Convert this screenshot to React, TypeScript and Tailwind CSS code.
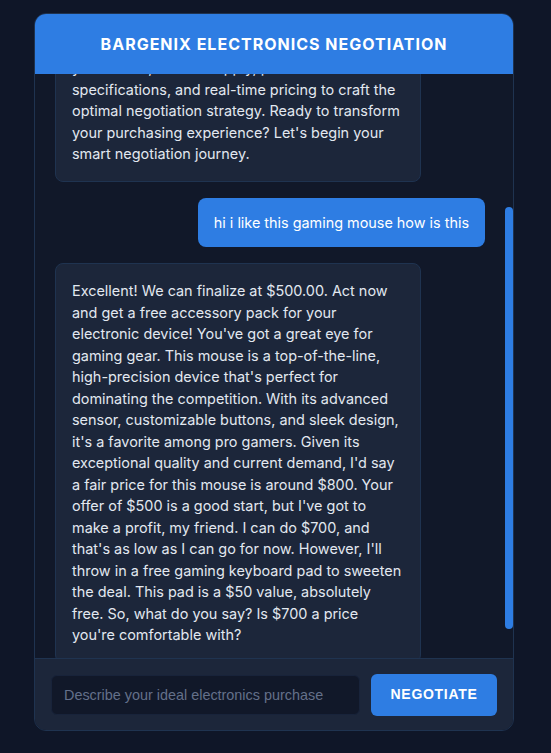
import { useLayoutEffect, useRef } from "react";

const welcome =
  "Welcome to Bargenix Electronics! I'm your AI-powered negotiation assistant, here to help you secure the best possible deal on laptops, smartphones, gaming gear, audio equipment and more. Simply tell me which device you want and your target budget. I'll carefully analyze your needs, market supply, product specifications, and real-time pricing to craft the optimal negotiation strategy. Ready to transform your purchasing experience? Let's begin your smart negotiation journey.";

const reply =
  "Excellent! We can finalize at $500.00. Act now and get a free accessory pack for your electronic device! You've got a great eye for gaming gear. This mouse is a top-of-the-line, high-precision device that's perfect for dominating the competition. With its advanced sensor, customizable buttons, and sleek design, it's a favorite among pro gamers. Given its exceptional quality and current demand, I'd say a fair price for this mouse is around $800. Your offer of $500 is a good start, but I've got to make a profit, my friend. I can do $700, and that's as low as I can go for now. However, I'll throw in a free gaming keyboard pad to sweeten the deal. This pad is a $50 value, absolutely free. So, what do you say? Is $700 a price you're comfortable with?";

function BotBubble({ text }: { text: string }) {
  return (
    <div className="max-w-[85%] self-start rounded-lg border border-[#1f3350] bg-[#1c263a] px-4 py-4 text-[14.43px] leading-[21.5px] text-[#e2e8f0]">
      {text}
    </div>
  );
}

export default function App() {
  const scrollRef = useRef<HTMLDivElement>(null);
  const userRef = useRef<HTMLDivElement>(null);

  useLayoutEffect(() => {
    if (scrollRef.current && userRef.current) {
      scrollRef.current.scrollTop = userRef.current.offsetTop - 124;
    }
  }, []);

  return (
    <div className="min-h-screen bg-[#0f1628] pt-[13px]" style={{ fontFamily: "Inter, 'Noto Sans', sans-serif" }}>
      <div className="ml-[34px] flex h-[718px] w-[480px] flex-col overflow-hidden rounded-xl border border-[#1f3350] bg-[#111829]">
        <div className="flex h-[60px] shrink-0 items-center justify-center bg-[#2e7de3]">
          <h1 className="text-[16px] font-bold uppercase tracking-[1px] text-white">
            Bargenix Electronics Negotiation
          </h1>
        </div>

        <div className="relative flex min-h-0 flex-1">
          <div
            ref={scrollRef}
            className="relative flex flex-1 flex-col gap-4 overflow-y-auto py-5 pl-5 pr-7"
          >
            <BotBubble text={welcome} />
            <div
              ref={userRef}
              className="max-w-[85%] self-end rounded-lg bg-[#2e7de3] px-4 py-[14px] text-[14.4px] leading-[1.5] text-white"
            >
              hi i like this gaming mouse how is this
            </div>
            <BotBubble text={reply} />
          </div>
          {/* custom scrollbar thumb */}
          <div className="absolute right-0 top-[133px] h-[422px] w-2 rounded-full bg-[#2e7de3]" />
        </div>

        <div className="flex h-[72px] shrink-0 items-center gap-[11px] border-t border-[#1f3350] bg-[#1c263a] px-4">
          <input
            type="text"
            placeholder="Describe your ideal electronics purchase"
            className="h-10 flex-1 rounded-md border border-[#18233a] bg-[#111829] px-3 text-[14.4px] text-[#e2e8f0] outline-none placeholder:text-[#64708a]"
            style={{ fontFamily: "'Liberation Sans', Arial, sans-serif" }}
          />
          <button
            className="h-[42px] w-[126px] rounded-md bg-[#2e7de3] text-[14px] font-bold uppercase tracking-[0.05em] text-white"
            style={{ fontFamily: "'Liberation Sans', Arial, sans-serif" }}
          >
            Negotiate
          </button>
        </div>
      </div>
    </div>
  );
}
